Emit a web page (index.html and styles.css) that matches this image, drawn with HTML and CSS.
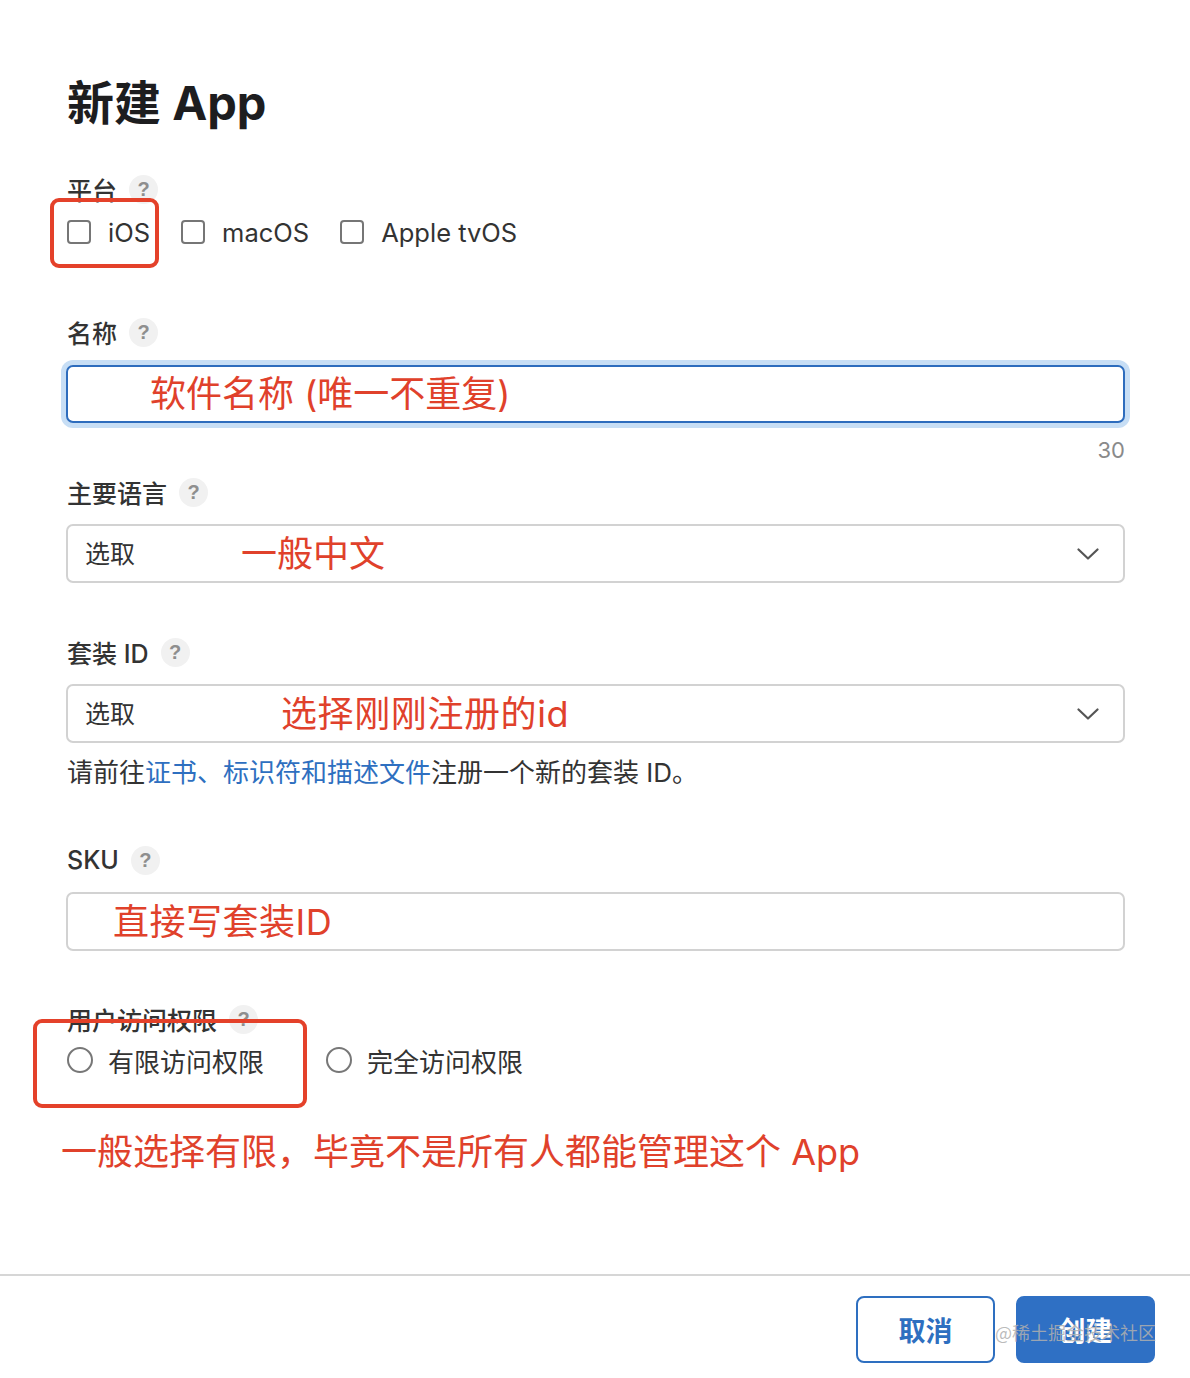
FILE: index.html
```html
<!DOCTYPE html>
<html lang="zh-CN">
<head>
<meta charset="utf-8">
<title>新建 App</title>
<link rel="stylesheet" href="styles.css">
</head>
<body>
<div class="page">
  <h1 class="title">新建 App</h1>

  <div class="label lbl-platform">平台 <span class="help">?</span></div>
  <div class="checks">
    <label class="check"><span class="box"></span>iOS</label>
    <label class="check"><span class="box"></span>macOS</label>
    <label class="check"><span class="box"></span>Apple tvOS</label>
  </div>

  <div class="label lbl-name">名称 <span class="help">?</span></div>
  <div class="field field-focus"><span class="note note-name">软件名称 (唯一不重复)</span></div>
  <div class="counter">30</div>

  <div class="label lbl-lang">主要语言 <span class="help">?</span></div>
  <div class="field select"><span class="placeholder">选取</span><span class="note note-lang">一般中文</span>
    <svg class="chev" width="22" height="12" viewBox="0 0 22 12"><path d="M1.5 1.5 L11 10.5 L20.5 1.5" fill="none" stroke="#555" stroke-width="2.2" stroke-linecap="round" stroke-linejoin="round"/></svg>
  </div>

  <div class="label lbl-bundle">套装 ID <span class="help">?</span></div>
  <div class="field select"><span class="placeholder">选取</span><span class="note note-bundle">选择刚刚注册的id</span>
    <svg class="chev" width="22" height="12" viewBox="0 0 22 12"><path d="M1.5 1.5 L11 10.5 L20.5 1.5" fill="none" stroke="#555" stroke-width="2.2" stroke-linecap="round" stroke-linejoin="round"/></svg>
  </div>
  <div class="hint">请前往<a class="link">证书、标识符和描述文件</a>注册一个新的套装 ID。</div>

  <div class="label lbl-sku">SKU <span class="help">?</span></div>
  <div class="field"><span class="note note-sku">直接写套装ID</span></div>

  <div class="label lbl-access">用户访问权限 <span class="help">?</span></div>
  <div class="radios">
    <label class="radio"><span class="circle"></span>有限访问权限</label>
    <label class="radio"><span class="circle"></span>完全访问权限</label>
  </div>

  <div class="note big-note">一般选择有限，毕竟不是所有人都能管理这个 App</div>

  <div class="mark mark-ios"></div>
  <div class="mark mark-access"></div>
</div>
<div class="footer">
  <button class="btn btn-cancel">取消</button>
  <button class="btn btn-create">创建</button>
  <span class="watermark">@稀土掘金技术社区</span>
</div>
</body>
</html>
```

FILE: styles.css
```css
* { box-sizing: border-box; }
html, body { margin: 0; padding: 0; background: #fff; }
body {
  font-family: Inter, "Noto Sans CJK SC", sans-serif;
  color: #333;
  width: 1190px;
  height: 1378px;
  overflow: hidden;
}
.page {
  position: relative;
  padding: 0 65px 0 66px;
}
.title {
  margin: 0;
  padding-top: 75px;
  height: 131px;
  font-size: 47px;
  line-height: 56px;
  font-weight: 700;
  color: #1d1d1f;
  padding-left: 1px;
}
.label {
  display: flex;
  align-items: center;
  height: 30px;
  font-size: 25px;
  font-weight: 500;
  color: #333;
  padding-left: 1px;
  gap: 12px;
}
.help {
  display: inline-flex;
  align-items: center;
  justify-content: center;
  width: 29px;
  height: 29px;
  border-radius: 50%;
  background: #f1f1f1;
  color: #8e8e8e;
  font-size: 20px;
  font-weight: 700;
  font-family: "Liberation Sans", sans-serif;
}
.lbl-platform { margin-top: 43px; }
.lbl-name { margin-top: 70px; }
.lbl-lang { margin-top: 14px; }
.lbl-bundle { margin-top: 54px; }
.lbl-sku { margin-top: 57px; }
.lbl-access { margin-top: 53px; }

.checks {
  display: flex;
  align-items: center;
  height: 30px;
  margin-top: 13px;
  padding-left: 1px;
  gap: 31px;
}
.check, .radio {
  display: flex;
  align-items: center;
  font-size: 25.5px;
  color: #333;
  gap: 17px;
}
.box {
  width: 24px;
  height: 24px;
  border: 2px solid #767676;
  border-radius: 4px;
  background: #fff;
}
.field {
  display: flex;
  align-items: center;
  height: 59px;
  margin-top: 17px;
  border: 2px solid #d2d2d2;
  border-radius: 7px;
  background: #fff;
}
.field-focus {
  height: 58px;
  margin-top: 18px;
  border-color: #2d6cbd;
  box-shadow: 0 0 0 5px #c7def5;
}
.note {
  color: #e0412b;
  font-size: 36px;
  font-weight: 400;
  line-height: 44px;
}
.note-name { padding-left: 82px; }
.note-sku { padding-left: 45px; letter-spacing: 0.5px; }
.select { padding-left: 17px; padding-right: 24px; }
.placeholder { font-size: 25px; color: #333; width: 50px; margin-top: -4px; }
.note-lang { margin-left: 106px; }
.note-bundle { margin-left: 146px; letter-spacing: 0.6px; }
.chev { margin-left: auto; }
.counter {
  margin-top: 14px;
  text-align: right;
  font-size: 22px;
  line-height: 26px;
  color: #8a8a8a;
}
.hint {
  margin-top: 15px;
  font-size: 26px;
  line-height: 30px;
  color: #333;
  padding-left: 1px;
}
.link { color: #2e6fc0; text-decoration: none; }
.radios {
  display: flex;
  align-items: center;
  height: 30px;
  margin-top: 11px;
  padding-left: 1px;
  gap: 62px;
}
.circle {
  width: 26px;
  height: 26px;
  border: 2px solid #777;
  border-radius: 50%;
}
.radio { gap: 15px; font-size: 26px; }
.big-note {
  margin-top: 55px;
  margin-left: -5px;
  line-height: 44px;
  font-size: 36px;
}
.mark {
  position: absolute;
  border: 4px solid #e4412a;
  border-radius: 9px;
}
.mark-ios { left: 50px; top: 198px; width: 109px; height: 70px; }
.mark-access { left: 33px; top: 1019px; width: 274px; height: 89px; }

.footer {
  position: relative;
  margin-top: 100px;
  border-top: 2px solid #d6d6d6;
  padding: 20px 35px 0 0;
  display: flex;
  justify-content: flex-end;
  gap: 21px;
}
.btn {
  width: 139px;
  height: 67px;
  border-radius: 8px;
  font-family: "Noto Sans CJK SC", sans-serif;
  font-size: 27px;
  font-weight: 700;
  padding: 0;
}
.btn-cancel {
  background: #fff;
  border: 2px solid #2e6fc0;
  color: #2e6fc0;
}
.btn-create {
  background: #2f70c4;
  border: 2px solid #2f70c4;
  color: #fff;
}
.watermark {
  position: absolute;
  left: 995px;
  top: 44px;
  font-family: "Noto Sans CJK SC", sans-serif;
  font-size: 18px;
  line-height: 24px;
  color: rgba(175, 175, 175, 0.85);
  white-space: nowrap;
}
```
